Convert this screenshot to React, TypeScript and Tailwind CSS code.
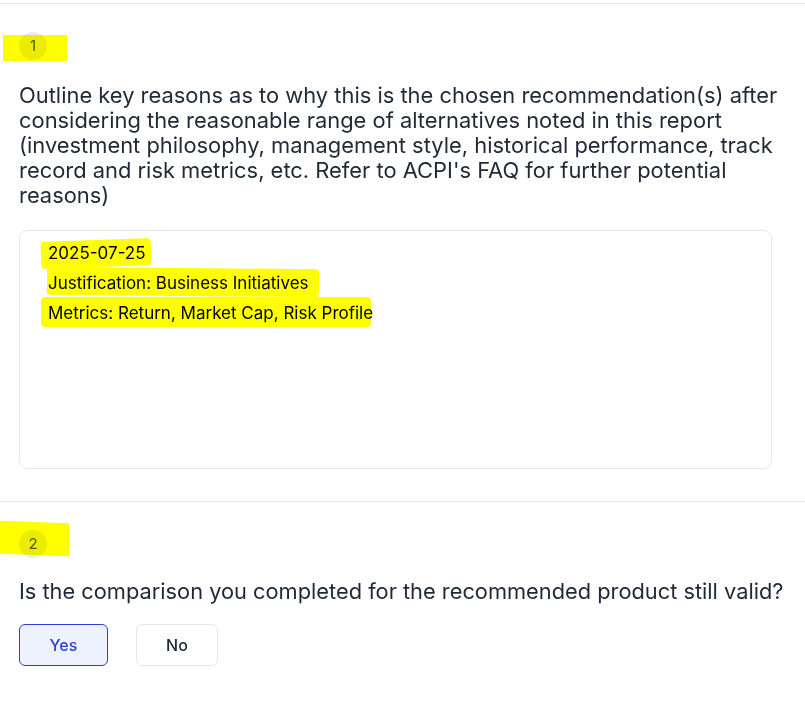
import { useState } from "react";

const MARKS_1 = [
  "left-[3px] top-[31px] h-[26px] w-[64px]",
];

function Marker({ className }: { className: string }) {
  return (
    <div
      className={
        "pointer-events-none absolute bg-[#ffff00] mix-blend-multiply " +
        className
      }
    />
  );
}

function StepBadge({ n }: { n: number }) {
  return (
    <div className="flex h-7 w-7 items-center justify-center rounded-full bg-[#ebecf0] text-[15px] text-gray-600">
      {n}
    </div>
  );
}

export default function App() {
  const [answer, setAnswer] = useState<"yes" | "no">("yes");

  return (
    <div
      className="relative min-h-[701px] w-[805px] bg-white text-gray-800"
      style={{ fontFamily: "Inter, 'Noto Sans', sans-serif" }}
    >
      <div className="h-[3px]" />

      {/* question 1 */}
      <section className="relative border-t border-gray-200 pl-[19px] pr-[12px] pt-[28px] pb-[32px]">
        <StepBadge n={1} />
        <p className="mt-[23px] text-[21.9px] leading-[25px] text-[#1f2937]">
          Outline key reasons as to why this is the chosen recommendation(s) after
          considering the reasonable range of alternatives noted in this report
          (investment philosophy, management style, historical performance, track
          record and risk metrics, etc. Refer to ACPI's FAQ for further potential
          reasons)
        </p>
        <div className="relative mt-[22px] h-[239px] w-[753px] rounded-lg border border-gray-200 px-[28px] pt-[7px] text-[17px] leading-[30px] text-black">
          <div>2025-07-25</div>
          <div>Justification: Business Initiatives</div>
          <div>Metrics: Return, Market Cap, Risk Profile</div>
          <Marker className="left-[21px] top-[9px] h-[27px] w-[110px] -rotate-2 rounded-sm" />
          <Marker className="left-[27px] top-[37px] h-[28px] w-[272px] rotate-[0.5deg] rounded-sm" />
          <Marker className="left-[21px] top-[66px] h-[30px] w-[330px] rounded-sm" />
        </div>
        {MARKS_1.map((m) => (
          <Marker key={m} className={m} />
        ))}
      </section>

      {/* question 2 */}
      <section className="relative border-t border-gray-200 pl-[19px] pr-[8px] pt-[28px] pb-[30px]">
        <StepBadge n={2} />
        <p className="mt-[21px] text-[21.8px] leading-[25px] text-[#1f2937]">
          Is the comparison you completed for the recommended product still valid?
        </p>
        <div className="mt-[20px] flex gap-[28px]">
          <button
            onClick={() => setAnswer("yes")}
            className={
              answer === "yes"
                ? "h-[42px] w-[89px] rounded-md border border-[#2b3fd6] bg-[#eef2fe] text-[16px] font-medium text-[#2b3fd6]"
                : "h-[42px] w-[89px] rounded-md border border-gray-200 bg-white text-[16px] font-medium text-gray-800"
            }
          >
            Yes
          </button>
          <button
            onClick={() => setAnswer("no")}
            className={
              answer === "no"
                ? "h-[42px] w-[82px] rounded-md border border-[#2b3fd6] bg-[#eef2fe] text-[16px] font-medium text-[#2b3fd6]"
                : "h-[42px] w-[82px] rounded-md border border-gray-200 bg-white text-[16px] font-medium text-gray-800"
            }
          >
            No
          </button>
        </div>
        <Marker className="left-0 top-[20px] h-[33px] w-[69px] skew-y-2" />
      </section>
    </div>
  );
}
